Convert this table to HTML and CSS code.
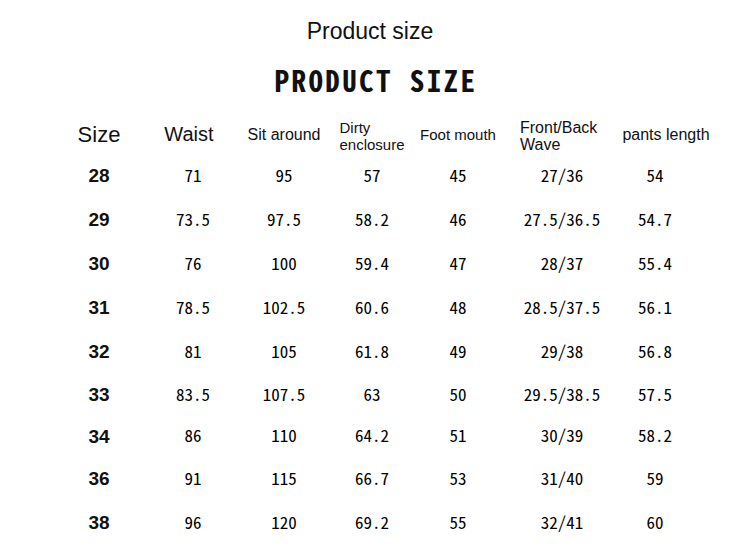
FILE: index.html
```html
<!DOCTYPE html>
<html>
<head>
<meta charset="utf-8">
<link rel="stylesheet" href="styles.css">
</head>
<body>
<div class="page">
  <h2 class="subtitle">Product size</h2>
  <h1 class="title">PRODUCT SIZE</h1>
  <div class="table">
    <div class="cell head h-size">Size</div>
    <div class="cell head h-waist">Waist</div>
    <div class="cell head h-sit">Sit around</div>
    <div class="cell head h-two">Dirty<br>enclosure</div>
    <div class="cell head h-foot">Foot mouth</div>
    <div class="cell head h-two h-wave">Front/Back<br>Wave</div>
    <div class="cell head h-pants">pants length</div>

    <div class="cell size">28</div><div class="cell num">71</div><div class="cell num">95</div><div class="cell num">57</div><div class="cell num">45</div><div class="cell num">27/36</div><div class="cell num">54</div>
    <div class="cell size">29</div><div class="cell num">73.5</div><div class="cell num">97.5</div><div class="cell num">58.2</div><div class="cell num">46</div><div class="cell num">27.5/36.5</div><div class="cell num">54.7</div>
    <div class="cell size">30</div><div class="cell num">76</div><div class="cell num">100</div><div class="cell num">59.4</div><div class="cell num">47</div><div class="cell num">28/37</div><div class="cell num">55.4</div>
    <div class="cell size">31</div><div class="cell num">78.5</div><div class="cell num">102.5</div><div class="cell num">60.6</div><div class="cell num">48</div><div class="cell num">28.5/37.5</div><div class="cell num">56.1</div>
    <div class="cell size">32</div><div class="cell num">81</div><div class="cell num">105</div><div class="cell num">61.8</div><div class="cell num">49</div><div class="cell num">29/38</div><div class="cell num">56.8</div>
    <div class="cell size">33</div><div class="cell num">83.5</div><div class="cell num">107.5</div><div class="cell num">63</div><div class="cell num">50</div><div class="cell num">29.5/38.5</div><div class="cell num">57.5</div>
    <div class="cell size">34</div><div class="cell num">86</div><div class="cell num">110</div><div class="cell num">64.2</div><div class="cell num">51</div><div class="cell num">30/39</div><div class="cell num">58.2</div>
    <div class="cell size">36</div><div class="cell num">91</div><div class="cell num">115</div><div class="cell num">66.7</div><div class="cell num">53</div><div class="cell num">31/40</div><div class="cell num">59</div>
    <div class="cell size">38</div><div class="cell num">96</div><div class="cell num">120</div><div class="cell num">69.2</div><div class="cell num">55</div><div class="cell num">32/41</div><div class="cell num">60</div>
  </div>
</div>
</body>
</html>
```
FILE: styles.css
```css
html, body {
  margin: 0;
  padding: 0;
  background: #ffffff;
}
.page {
  width: 750px;
  height: 550px;
  overflow: hidden;
  color: #111;
  font-family: "Liberation Sans", Arial, sans-serif;
}
.subtitle {
  margin: 16px 0 0;
  padding-right: 10px;
  font-size: 23px;
  line-height: 30px;
  font-weight: normal;
  text-align: center;
}
.title {
  margin: 4px 0 0;
  height: 58px;
  font-family: "Noto Sans CJK SC", sans-serif;
  font-feature-settings: "hwid" 1;
  font-size: 29px;
  line-height: 58px;
  font-weight: 700;
  text-align: center;
  letter-spacing: 2.4px;
  padding-left: 2px;
}
.table {
  display: grid;
  grid-template-columns: 94px 94px 88px 88px 84px 124px 62px;
  grid-template-rows: 40px 44px 44px 44px 44px 44px 42px 41px 44px 44px;
  margin-left: 52px;
  margin-top: 6px;
}
.cell {
  display: flex;
  align-items: center;
  justify-content: center;
  white-space: nowrap;
}
.head {
  font-size: 16px;
  line-height: 17px;
}
.h-size { font-size: 22px; }
.h-waist { font-size: 20px; padding-right: 8px; }
.h-foot { font-size: 15px; }
.h-two {
  font-size: 15px;
  text-align: left;
  padding-top: 3px;
}
.h-wave {
  font-size: 16px;
  justify-content: flex-start;
  padding-left: 20px;
  padding-top: 4px;
}
.h-pants { padding-left: 22px; }
.size {
  font-size: 19px;
  font-weight: bold;
}
.num {
  font-family: "Noto Sans CJK SC", sans-serif;
  font-feature-settings: "hwid" 1;
  font-size: 17px;
  font-weight: 400;
  color: #000;
  padding-bottom: 4px;
}
```
